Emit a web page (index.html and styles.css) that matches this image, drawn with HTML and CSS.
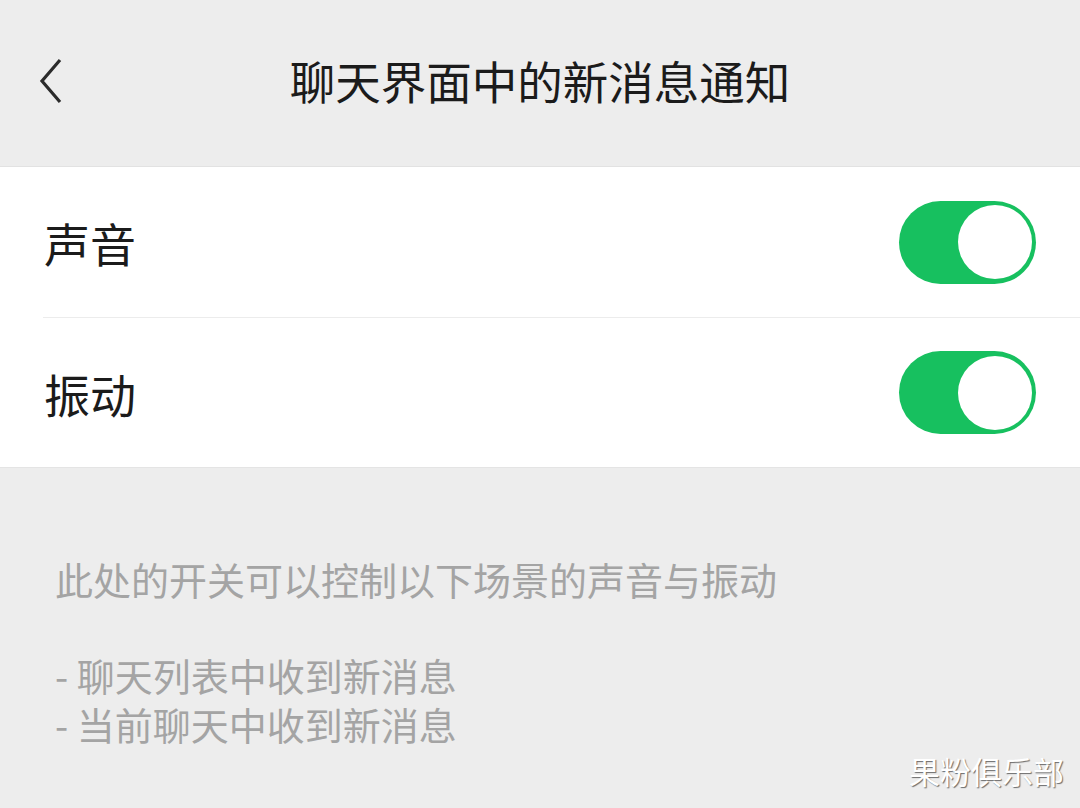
FILE: index.html
```html
<!DOCTYPE html>
<html lang="zh-CN">
<head>
<meta charset="utf-8">
<link rel="stylesheet" href="styles.css">
</head>
<body>
<div class="page">
  <header class="topbar">
    <span class="back">
      <svg width="26" height="46" viewBox="0 0 26 46"><path d="M22 2 L4 23 L22 44" fill="none" stroke="#2b2b2b" stroke-width="3.2" stroke-linecap="butt" stroke-linejoin="miter"/></svg>
    </span>
    <h1 class="title">聊天界面中的新消息通知</h1>
  </header>
  <section class="group">
    <div class="row">
      <span class="label">声音</span>
      <span class="switch"><span class="knob"></span></span>
    </div>
    <div class="row">
      <span class="label">振动</span>
      <span class="switch"><span class="knob"></span></span>
    </div>
  </section>
  <div class="note">
    <p class="note-line">此处的开关可以控制以下场景的声音与振动</p>
    <p class="note-line gap">- 聊天列表中收到新消息<br>- 当前聊天中收到新消息</p>
  </div>
  <div class="watermark">果粉俱乐部</div>
</div>
</body>
</html>
```

FILE: styles.css
```css
* { box-sizing: border-box; margin: 0; padding: 0; }
html, body { width: 1080px; height: 808px; overflow: hidden; }
body {
  background: #ededed;
  font-family: "Noto Sans CJK SC", "Noto Sans", sans-serif;
  color: #1a1a1a;
}
.page { position: relative; width: 1080px; height: 808px; }
.topbar {
  position: relative;
  height: 167px;
  display: flex;
  align-items: center;
  justify-content: center;
  border-bottom: 1px solid #e2e2e2;
}
.back {
  position: absolute;
  left: 38px;
  top: 58px;
  width: 26px;
  height: 46px;
  display: block;
}
.back svg { display: block; }
.title {
  font-size: 45.5px;
  font-weight: 400;
  line-height: 1;
  color: #1b1b1b;
  margin-top: -5px;
}
.group {
  background: #ffffff;
  border-bottom: 1px solid #e4e4e4;
}
.row {
  height: 150px;
  display: flex;
  align-items: center;
  justify-content: space-between;
  padding: 0 44px 0 44px;
}
.row + .row { border-top: 1px solid #ececec; margin-left: 43px; padding-left: 1px; }
.label {
  font-size: 46px;
  line-height: 1;
  color: #1b1b1b;
}
.switch {
  width: 137px;
  height: 83px;
  border-radius: 42px;
  background: #17c05f;
  display: flex;
  align-items: center;
  justify-content: flex-end;
  padding-right: 4px;
}
.knob {
  width: 74px;
  height: 74px;
  border-radius: 50%;
  background: #ffffff;
}
.note {
  padding: 86px 0 0 55px;
}
.note-line {
  font-size: 38px;
  line-height: 49px;
  color: #a4a4a4;
}
.note-line.gap { margin-top: 47px; }
.watermark {
  position: absolute;
  left: 909px;
  top: 751px;
  font-size: 31px;
  line-height: 40px;
  color: #ffffff;
  text-shadow: 1px 1px 1px rgba(0,0,0,0.55);
}
```
